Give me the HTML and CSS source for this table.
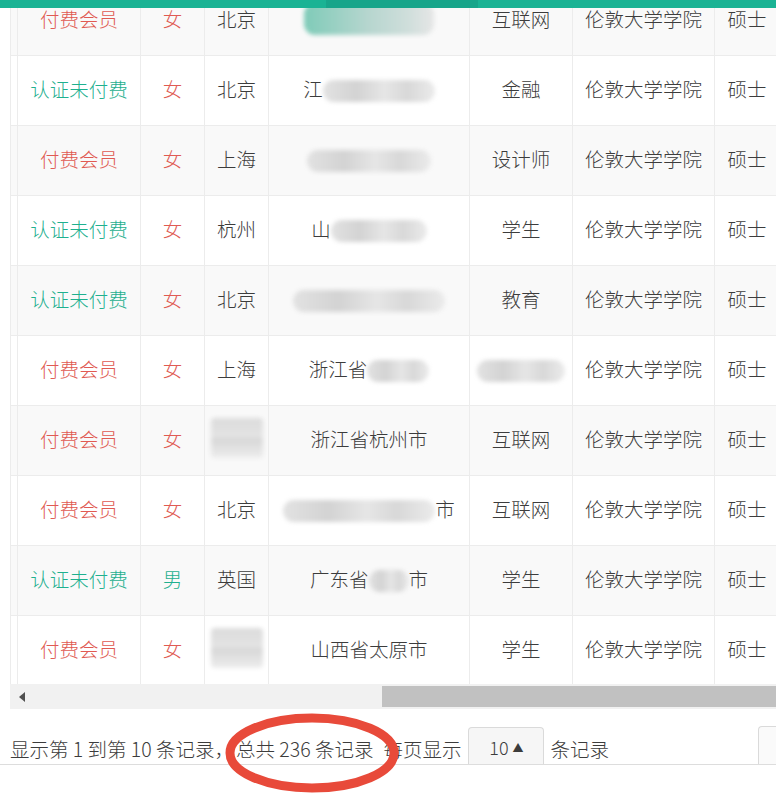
FILE: index.html
```html
<!DOCTYPE html>
<html lang="zh-CN">
<head>
  <meta charset="UTF-8" />
  <meta name="viewport" content="width=device-width, initial-scale=1.0"/>
  <title>会员列表</title>
  <link rel="stylesheet" href="styles.css">
</head>
<body>
  <div class="topbar">
    <span class="seg"></span>
    <span class="seg dark"></span>
    <span class="seg"></span>
  </div>

  <div class="table-view">
    <table class="members">
      <colgroup>
        <col style="width:7px">
        <col style="width:123px">
        <col style="width:64px">
        <col style="width:64px">
        <col style="width:201px">
        <col style="width:103px">
        <col style="width:142px">
        <col style="width:65px">
      </colgroup>
      <tbody>
        <tr>
          <td></td>
          <td class="paid">付费会员</td>
          <td class="paid">女</td>
          <td>北京</td>
          <td><span class="blur teal" style="width:130px"></span></td>
          <td>互联网</td>
          <td>伦敦大学学院</td>
          <td>硕士</td>
        </tr>
        <tr>
          <td></td>
          <td class="unpaid">认证未付费</td>
          <td class="paid">女</td>
          <td>北京</td>
          <td>江<span class="blur" style="width:112px"></span></td>
          <td>金融</td>
          <td>伦敦大学学院</td>
          <td>硕士</td>
        </tr>
        <tr>
          <td></td>
          <td class="paid">付费会员</td>
          <td class="paid">女</td>
          <td>上海</td>
          <td><span class="blur" style="width:124px"></span></td>
          <td>设计师</td>
          <td>伦敦大学学院</td>
          <td>硕士</td>
        </tr>
        <tr>
          <td></td>
          <td class="unpaid">认证未付费</td>
          <td class="paid">女</td>
          <td>杭州</td>
          <td>山<span class="blur" style="width:96px"></span></td>
          <td>学生</td>
          <td>伦敦大学学院</td>
          <td>硕士</td>
        </tr>
        <tr>
          <td></td>
          <td class="unpaid">认证未付费</td>
          <td class="paid">女</td>
          <td>北京</td>
          <td><span class="blur" style="width:152px"></span></td>
          <td>教育</td>
          <td>伦敦大学学院</td>
          <td>硕士</td>
        </tr>
        <tr>
          <td></td>
          <td class="paid">付费会员</td>
          <td class="paid">女</td>
          <td>上海</td>
          <td>浙江省<span class="blur" style="width:62px"></span></td>
          <td><span class="blur" style="width:88px"></span></td>
          <td>伦敦大学学院</td>
          <td>硕士</td>
        </tr>
        <tr>
          <td></td>
          <td class="paid">付费会员</td>
          <td class="paid">女</td>
          <td><span class="blur square" style="width:52px"></span></td>
          <td>浙江省杭州市</td>
          <td>互联网</td>
          <td>伦敦大学学院</td>
          <td>硕士</td>
        </tr>
        <tr>
          <td></td>
          <td class="paid">付费会员</td>
          <td class="paid">女</td>
          <td>北京</td>
          <td><span class="blur" style="width:152px"></span>市</td>
          <td>互联网</td>
          <td>伦敦大学学院</td>
          <td>硕士</td>
        </tr>
        <tr>
          <td></td>
          <td class="unpaid">认证未付费</td>
          <td class="unpaid">男</td>
          <td>英国</td>
          <td>广东省<span class="blur" style="width:40px"></span>市</td>
          <td>学生</td>
          <td>伦敦大学学院</td>
          <td>硕士</td>
        </tr>
        <tr>
          <td></td>
          <td class="paid">付费会员</td>
          <td class="paid">女</td>
          <td><span class="blur square" style="width:52px"></span></td>
          <td>山西省太原市</td>
          <td>学生</td>
          <td>伦敦大学学院</td>
          <td>硕士</td>
        </tr>
      </tbody>
    </table>
  </div>

  <div class="scrollbar">
    <span class="arrow"></span>
    <span class="thumb"></span>
  </div>

  <div class="pager">
    <span class="info">显示第 1 到第 10 条记录，<span class="total">总共 236 条记录</span></span>
    <span class="per-page">每页显示</span>
    <span class="page-size">10 <span class="caret">▲</span></span>
    <span>条记录</span>
    <span class="pages"></span>
    <svg class="circle" width="190" height="86" viewBox="0 0 190 86">
      <ellipse cx="95" cy="43" rx="82" ry="35" fill="none" stroke="#e84a3a" stroke-width="9"/>
    </svg>
  </div>
</body>
</html>
```

FILE: styles.css
```css
* {
  margin: 0;
  padding: 0;
  box-sizing: border-box;
}

body {
  width: 776px;
  min-height: 100vh;
  overflow: hidden;
  font-family: "Noto Sans CJK SC", "Noto Sans", sans-serif;
  font-weight: 300;
  font-size: 19.5px;
  color: #3c3c3c;
  background-color: #ffffff;
}

.topbar {
  position: fixed;
  top: 0;
  left: 0;
  width: 100%;
  height: 8px;
  display: flex;
  z-index: 5;
}

.topbar .seg {
  flex: 326px 0 0;
  background-color: #1ab394;
}

.topbar .seg.dark {
  flex-basis: 152px;
  background-color: #17a58a;
}

.topbar .seg:last-child {
  flex: 1;
}

.table-view {
  height: 684px;
  margin-left: 10px;
  overflow: hidden;
}

.members {
  width: 769px;
  margin-top: -15px;
  border-collapse: collapse;
  table-layout: fixed;
}

.members td {
  height: 70px;
  padding-bottom: 5px;
  border: 1px solid #ececec;
  text-align: center;
  white-space: nowrap;
  overflow: hidden;
}

.members tr:nth-child(odd) td {
  background-color: #f9f9f9;
}

.paid {
  color: #e05a52;
}

.unpaid {
  color: #1fb08f;
}

.blur {
  display: inline-block;
  height: 22px;
  vertical-align: middle;
  border-radius: 11px;
  background: linear-gradient(90deg, #e2e2e2, #d3d3d3 30%, #e6e6e6 55%, #d8d8d8 75%, #ebebeb);
  filter: blur(2px);
}

.blur.square {
  height: 40px;
  border-radius: 4px;
  background: linear-gradient(180deg, #dcdcdc, #e4e4e4 50%, #d6d6d6 50%, #ededed);
}

.blur.teal {
  height: 32px;
  background: linear-gradient(90deg, #7fcbb8, #b7d6cf 50%, #cfdedb 80%, #e6e6e6);
}

.scrollbar {
  display: flex;
  align-items: center;
  height: 25px;
  margin-left: 10px;
  background-color: #f1f1f1;
}

.arrow {
  width: 0;
  height: 0;
  margin-left: 9px;
  border-top: 5px solid transparent;
  border-bottom: 5px solid transparent;
  border-right: 6px solid #505050;
}

.thumb {
  height: 21px;
  margin-left: 357px;
  flex: 1;
  background-color: #c1c1c1;
}

.pager {
  position: relative;
  display: flex;
  align-items: flex-end;
  height: 56px;
  padding-left: 10px;
  border-bottom: 1px solid #dddddd;
}

.pager > span {
  line-height: 30px;
}

.info {
  white-space: nowrap;
}

.total {
  margin-left: 2px;
}

.per-page {
  margin-left: 10px;
}

.page-size {
  width: 76px;
  height: 37px;
  margin: 0 6px 0 7px;
  padding-top: 4px;
  border: 1px solid #dadada;
  border-bottom: none;
  border-radius: 4px 4px 0 0;
  background-color: #f6f6f6;
  text-align: center;
  font-size: 18px;
}

.caret {
  font-size: 11px;
  vertical-align: 3px;
}

.pages {
  width: 18px;
  height: 38px;
  margin-left: auto;
  border: 1px solid #dadada;
  border-right: none;
  border-bottom: none;
  border-radius: 4px 0 0 0;
  background-color: #fafafa;
}

.circle {
  position: absolute;
  left: 217px;
  top: 1px;
}
```
